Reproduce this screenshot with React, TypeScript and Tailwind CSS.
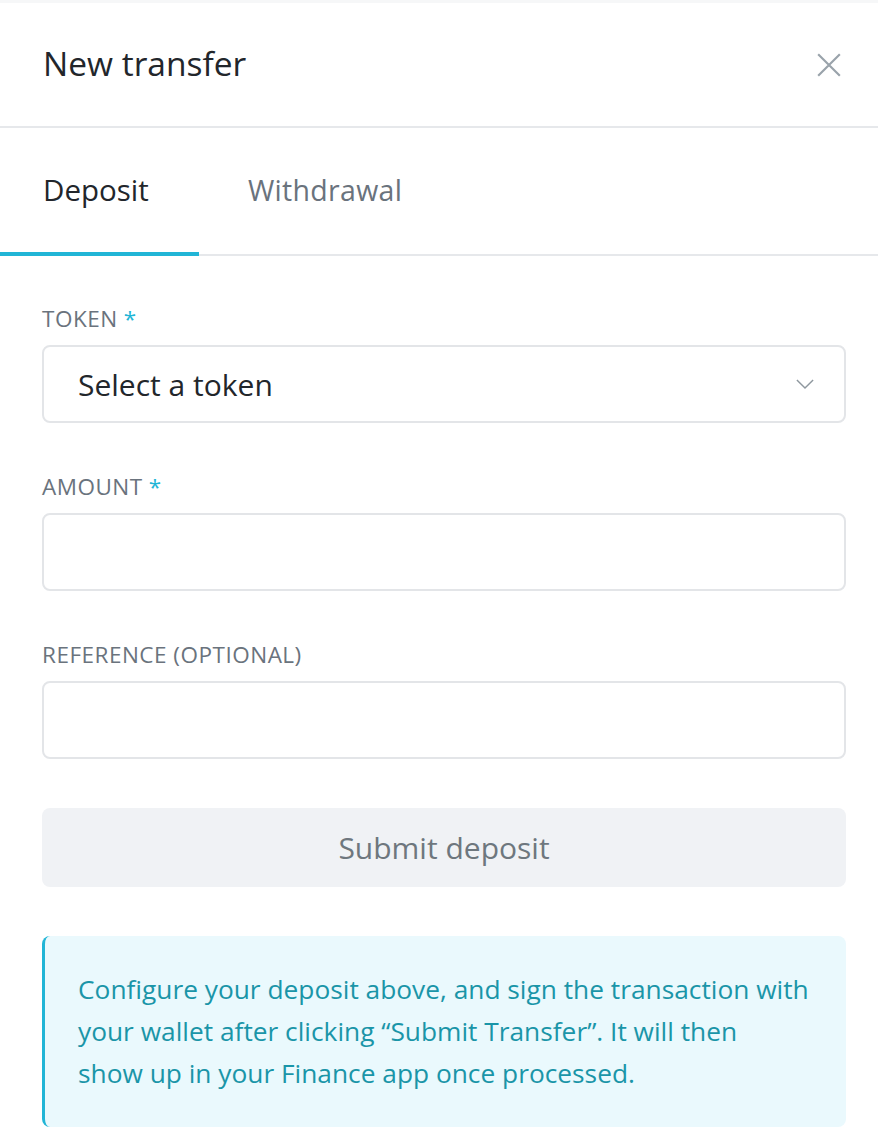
import { useState } from "react";

const FONT = { fontFamily: '"Open Sans", "Liberation Sans", sans-serif' };

function Field({
  label,
  required,
  children,
}: {
  label: string;
  required?: boolean;
  children: React.ReactNode;
}) {
  return (
    <div className="mb-[49px]">
      <label className="block text-[22.5px] leading-[30px] tracking-[0.5px] text-[#6a737d] mb-[11px]">
        {label}
        {required && <span className="text-[#21b5d6] ml-[6px]">*</span>}
      </label>
      {children}
    </div>
  );
}

export default function App() {
  const [tab, setTab] = useState<"deposit" | "withdrawal">("deposit");

  return (
    <div className="w-[878px] min-h-[1148px] bg-white" style={FONT}>
      <div className="h-[3px] bg-[#f6f7f8]" />

      {/* Header */}
      <div className="h-[125px] flex items-center justify-between pl-[43px] pr-[36px] border-b-2 border-[#e6e8eb]">
        <h1 className="text-[33.5px] text-[#22262b] -mt-[2px]">New transfer</h1>
        <button className="w-[26px] h-[26px] text-[#9aa3ab]">
          <svg viewBox="0 0 24 24" width="26" height="26" fill="none" stroke="currentColor" strokeWidth="2">
            <path d="M2 2L22 22M22 2L2 22" />
          </svg>
        </button>
      </div>

      {/* Tabs */}
      <div className="flex border-b-2 border-[#e6e8eb]">
        <button
          onClick={() => setTab("deposit")}
          className={`w-[199px] h-[128px] -mb-[2px] text-left pl-[43px] text-[29.5px] border-b-4 ${
            tab === "deposit" ? "text-[#22262b] border-[#21b5d6]" : "text-[#6a737d] border-transparent"
          }`}
        >
          Deposit
        </button>
        <button
          onClick={() => setTab("withdrawal")}
          className={`h-[128px] -mb-[2px] pl-[49px] pr-[40px] text-left text-[28.5px] tracking-[0.3px] border-b-4 ${
            tab === "withdrawal" ? "text-[#22262b] border-[#21b5d6]" : "text-[#6a737d] border-transparent"
          }`}
        >
          Withdrawal
        </button>
      </div>

      {/* Form */}
      <div className="pl-[42px] pr-[32px] pt-[48px]">
        <Field label="TOKEN" required>
          <div className="h-[78px] rounded-[8px] border-2 border-[#e3e5e8] flex items-center justify-between pl-[34px] pr-[30px]">
            <span className="text-[30px] text-[#22262b]">Select a token</span>
            <svg viewBox="0 0 20 12" width="18" height="11" fill="none" stroke="#8e979e" strokeWidth="1.6">
              <path d="M1 1L10 10L19 1" />
            </svg>
          </div>
        </Field>

        <Field label="AMOUNT" required>
          <input className="w-full h-[78px] rounded-[8px] border-2 border-[#e3e5e8] outline-none px-[34px] text-[30px]" />
        </Field>

        <Field label="REFERENCE (OPTIONAL)">
          <input className="w-full h-[78px] rounded-[8px] border-2 border-[#e3e5e8] outline-none px-[34px] text-[30px]" />
        </Field>

        <button className="w-full h-[79px] rounded-[8px] bg-[#f0f2f5] text-[30px] text-[#6e777e]">
          Submit deposit
        </button>

        <div className="mt-[49px] rounded-[8px] bg-[#eaf9fd] border-l-[3px] border-[#21b5d6] pl-[33px] pr-[24px] pt-[32px] pb-[33px]">
          <p className="text-[26.3px] leading-[42px] text-[#1a95a8]">
            Configure your deposit above, and sign the transaction with your wallet after clicking
            “Submit Transfer”. It will then
            <br />
            show up in your Finance app once processed.
          </p>
        </div>
      </div>
    </div>
  );
}
